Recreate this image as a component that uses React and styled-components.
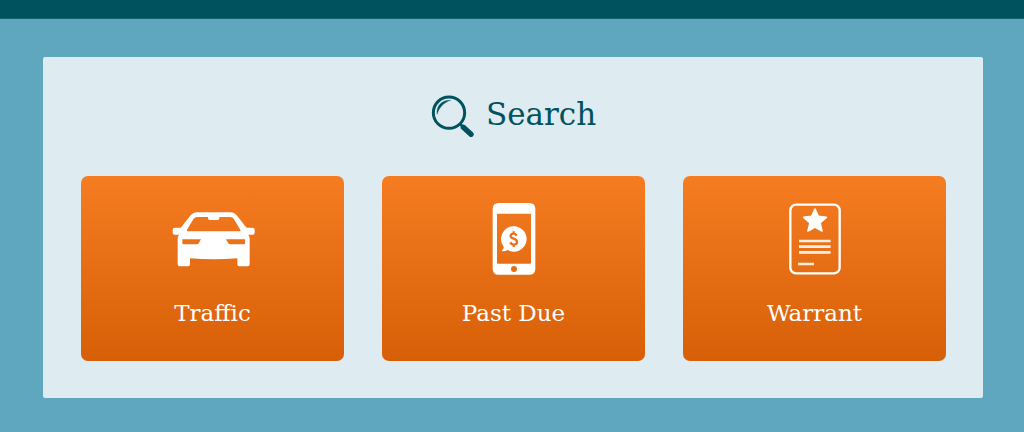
import React from "react";
import styled, { createGlobalStyle } from "styled-components";

const GlobalStyle = createGlobalStyle`
  * { box-sizing: border-box; }
  body {
    margin: 0;
    background: #5fa6bf;
    font-family: "Roboto Slab", "DejaVu Serif", serif;
  }
`;

const TopBar = styled.header`
  height: 19px;
  background: #00535e;
  border-bottom: 1px solid #17636f;
`;

const Main = styled.main`
  padding: 38px 41px 34px 43px;
`;

const Panel = styled.section`
  padding: 38px 37px 37px 38px;
  border-radius: 2px;
  background: #deebf1;
`;

const Heading = styled.h1`
  display: flex;
  align-items: center;
  justify-content: center;
  gap: 12px;
  margin: 0 0 39px;
  color: #00535e;
  font-size: 31px;
  font-weight: 400;
  line-height: 42px;
`;

const HeadingText = styled.span`
  line-height: 38px;
  padding-bottom: 4px;
`;

const Tiles = styled.nav`
  display: grid;
  grid-template-columns: repeat(3, 1fr);
  gap: 38px;
`;

const Tile = styled.a`
  display: flex;
  flex-direction: column;
  align-items: center;
  gap: 22px;
  padding: 27px 16px 32px;
  border-radius: 7px;
  background: linear-gradient(#f57c21, #d75f07);
  color: #fff;
  font-size: 23px;
  line-height: 32px;
  text-decoration: none;
`;

const Icon = styled.svg`
  display: block;
  flex: none;
`;

function SearchIcon() {
  return (
    <Icon width="43" height="42" viewBox="33 30 129 126" fill="none" stroke="#00535e" aria-hidden="true">
      <circle cx="87" cy="83" r="47" strokeWidth="9" />
      <path d="M119 116l10 9" strokeWidth="8" />
      <path d="M130 127l23 21" strokeWidth="16" strokeLinecap="round" />
      <path d="M51 88C48 61 68 44 92 46C73 52 59 65 51 88Z" fill="#00535e" stroke="#00535e" strokeWidth="1" />
    </Icon>
  );
}

function CarIcon() {
  return (
    <Icon width="84" height="72" viewBox="31 9 252 216" fill="#fff" aria-hidden="true">
      <path
        fillRule="evenodd"
        d="M108 37H209Q221 37 228 46L256 81Q257 83 260 83H276Q282 83 282 89V98Q282 104 276 104H263Q267 109 267 117V193Q267 199 261 199H236Q230 199 230 193V175Q159 181 88 175V193Q88 199 82 199H57Q51 199 51 193V117Q51 109 55 104H42Q36 104 36 98V89Q36 83 42 83H58Q61 83 62 81L90 46Q97 37 108 37Z
        M109 51Q103 51 99 56L79 89Q77 94 83 94H235Q241 94 239 89L219 56Q215 51 209 51H176V55Q176 60 171 60H147Q142 60 142 55V51Z
        M65 118H121L114 130Q112 133 107 133H69Q65 133 65 129Z
        M253 118H196L203 130Q205 133 210 133H249Q253 133 253 129Z"
      />
    </Icon>
  );
}

function PhoneIcon() {
  return (
    <Icon width="44" height="72" viewBox="35 24 132 216" fill="#fff" aria-hidden="true">
      <path
        fillRule="evenodd"
        d="M55 24H147Q165 24 165 42V221Q165 239 147 239H55Q37 239 37 221V42Q37 24 55 24Z
        M53 56Q50 56 50 59V203Q50 206 53 206H149Q152 206 152 203V59Q152 56 149 56Z
        M101 213A9 9 0 1 0 101 231A9 9 0 1 0 101 213Z"
      />
      <path d="M101 94A38 38 0 1 1 82 165Q76 169 66 169Q63 168 66 165Q71 161 70 155A38 38 0 0 1 101 94Z" />
      <path
        d="M109 122Q106 116 100 116Q91 116 91 123Q91 128 100 131Q110 134 110 141Q110 149 100 149Q93 149 90 142M100 109V117M100 148V156"
        fill="none"
        stroke="#ea7019"
        strokeWidth="7"
      />
    </Icon>
  );
}

function WarrantIcon() {
  return (
    <Icon width="54" height="72" viewBox="38 24 162 216" aria-hidden="true">
      <rect x="45" y="29" width="148" height="206" rx="17" fill="none" stroke="#fff" strokeWidth="7" />
      <path
        d="M119 42L129 64L153 67L134 84L140 108L119 96L98 108L104 84L85 67L109 64Z"
        fill="#fff"
        stroke="#fff"
        strokeWidth="5"
        strokeLinejoin="round"
      />
      <path d="M71 138H166M71 155H166M71 172H166M68 207H116" fill="none" stroke="#fdeee2" strokeWidth="8" />
    </Icon>
  );
}

const searches = [
  { label: "Traffic", href: "#traffic", Picture: CarIcon },
  { label: "Past Due", href: "#past-due", Picture: PhoneIcon },
  { label: "Warrant", href: "#warrant", Picture: WarrantIcon },
];

export default function App() {
  return (
    <>
      <GlobalStyle />
      <TopBar />
      <Main>
        <Panel aria-labelledby="search-heading">
          <Heading id="search-heading">
            <SearchIcon />
            <HeadingText>Search</HeadingText>
          </Heading>
          <Tiles aria-labelledby="search-heading">
            {searches.map(({ label, href, Picture }) => (
              <Tile key={label} href={href}>
                <Picture />
                <span>{label}</span>
              </Tile>
            ))}
          </Tiles>
        </Panel>
      </Main>
    </>
  );
}
